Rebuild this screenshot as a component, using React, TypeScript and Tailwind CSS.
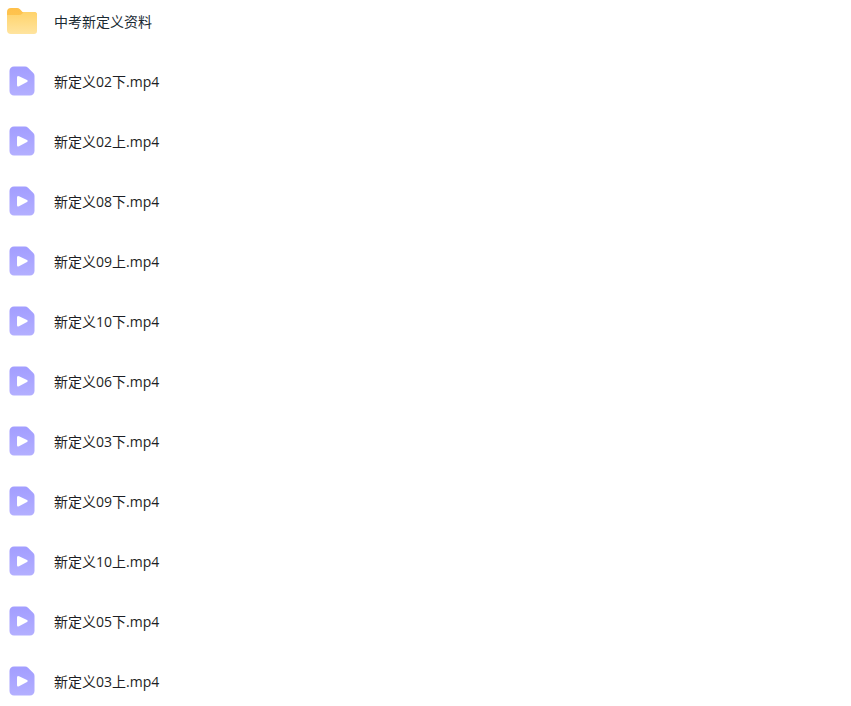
import React from 'react';

const files = [
  '新定义02下.mp4',
  '新定义02上.mp4',
  '新定义08下.mp4',
  '新定义09上.mp4',
  '新定义10下.mp4',
  '新定义06下.mp4',
  '新定义03下.mp4',
  '新定义09下.mp4',
  '新定义10上.mp4',
  '新定义05下.mp4',
  '新定义03上.mp4',
];

function FolderIcon() {
  return (
    <svg width="30" height="26" viewBox="0 0 30 26">
      <defs>
        <linearGradient id="folderBack" x1="0" y1="0" x2="0" y2="1">
          <stop offset="0" stopColor="#ffc04a" />
          <stop offset="1" stopColor="#fdc653" />
        </linearGradient>
        <linearGradient id="folderFront" x1="0" y1="0" x2="0" y2="1">
          <stop offset="0" stopColor="#ffd36b" />
          <stop offset="1" stopColor="#ffe49f" />
        </linearGradient>
      </defs>
      <path d="M0 4A4 4 0 0 1 4 0H10q1.800 0 3 1.200L15.500 4H27a3 3 0 0 1 3 3v5H0Z" fill="url(#folderBack)" />
      <path d="M0 7h12q2 0 3.200-1.300L16.500 4H27a3 3 0 0 1 3 3v16a3 3 0 0 1-3 3H4a4 4 0 0 1-4-4Z" fill="url(#folderFront)" />
    </svg>
  );
}

function VideoIcon({ id }: { id: number }) {
  return (
    <svg width="26" height="30" viewBox="0 0 26 30">
      <defs>
        <linearGradient id={`video${id}`} x1="0" y1="0" x2="0" y2="1">
          <stop offset="0" stopColor="#a29dff" />
          <stop offset="1" stopColor="#b3afff" />
        </linearGradient>
      </defs>
      <path d="M5 .5H16Q17.800 .5 19 1.700L24.300 7Q25.500 8.200 25.500 10V25a4.500 4.500 0 0 1-4.500 4.500H5A4.500 4.500 0 0 1 .5 25V5A4.500 4.500 0 0 1 5 .5Z" fill={`url(#video${id})`} />
      <path d="M8 11.500Q8 9.200 10 10.200L18 14Q19.800 15 18 16L10 20.300Q8 21.300 8 19Z" fill="#ffffff" />
    </svg>
  );
}

export default function App() {
  return (
    <div className="h-[706px] w-[851px] overflow-hidden bg-white font-['Open_Sans','Noto_Sans_CJK_SC',sans-serif] text-sm text-[#1d1e24]">
      <div className="flex h-[44px] items-center">
        <div className="ml-[7px] flex w-[47px] -translate-y-px items-center">
          <FolderIcon />
        </div>
        <span className="text-[#1a2a33]">中考新定义资料</span>
      </div>
      {files.map((name, i) => (
        <div key={name} className="mt-[16px] flex h-[44px] items-center">
          <div className="ml-[9px] flex w-[45px] -translate-y-px items-center">
            <VideoIcon id={i} />
          </div>
          <span>{name}</span>
        </div>
      ))}
    </div>
  );
}
